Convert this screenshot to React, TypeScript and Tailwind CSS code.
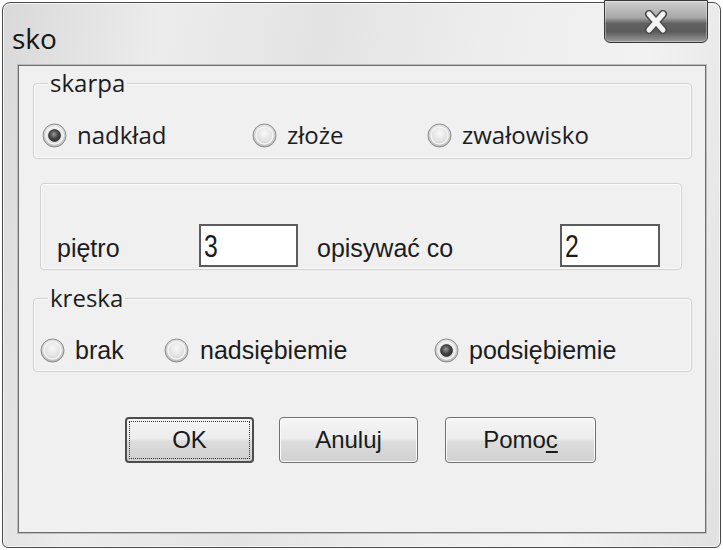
import React from 'react'

const segoe = { fontFamily: '"Open Sans", "Noto Sans", sans-serif' }
const arial = { fontFamily: '"Liberation Sans", Arial, sans-serif' }

function Radio({ checked }: { checked?: boolean }) {
  return (
    <svg width="25" height="25" viewBox="0 0 25 25" className="shrink-0">
      <defs>
        <radialGradient id="ring" cx="50%" cy="40%" r="60%">
          <stop offset="0%" stopColor="#f9f9f9" />
          <stop offset="60%" stopColor="#e0e0e0" />
          <stop offset="100%" stopColor="#b4b4b4" />
        </radialGradient>
        <radialGradient id="dot" cx="45%" cy="40%" r="60%">
          <stop offset="0%" stopColor="#9a9a9a" />
          <stop offset="55%" stopColor="#4a4a4a" />
          <stop offset="100%" stopColor="#2a2a2a" />
        </radialGradient>
      </defs>
      <circle cx="12.5" cy="12.5" r="11.5" fill="url(#ring)" stroke="#8c8c8c" strokeWidth="1" />
      <circle cx="12.5" cy="12.5" r="8.5" fill="none" stroke="#f4f4f4" strokeWidth="1.5" />
      {checked && <circle cx="12.5" cy="12.5" r="6" fill="url(#dot)" stroke="#3a3a3a" strokeWidth="0.8" />}
    </svg>
  )
}

function Group({ label, className, children }: { label?: string; className: string; children: React.ReactNode }) {
  return (
    <div className={`relative rounded-[4px] border border-[#d2d2d2] shadow-[inset_0_0_0_1px_#fbfbfb] ${className}`}>
      {label && (
        <span style={segoe} className="absolute left-[14px] top-[-15px] bg-[#f0f0f0] px-[2px] text-[24px] leading-[28px] text-[#1c1c1c]">
          {label}
        </span>
      )}
      {children}
    </div>
  )
}

function Button({ children, def, className }: { children: React.ReactNode; def?: boolean; className: string }) {
  return (
    <div
      style={arial}
      className={`flex h-[46px] items-center justify-center rounded-[4px] border bg-[linear-gradient(to_bottom,#f5f5f5_0%,#ececec_48%,#dddddd_52%,#d0d0d0_100%)] text-[24px] text-[#1a1a1a] ${
        def ? 'border-[#4d4d4d] border-2 p-[2px]' : 'border-[#707070] shadow-[inset_0_0_0_1px_#fafafa]'
      } ${className}`}
    >
      {def ? (
        <div className="flex h-full w-full items-center justify-center border border-dotted border-[#333]">{children}</div>
      ) : (
        children
      )}
    </div>
  )
}

export default function App() {
  return (
    <div className="h-[550px] w-[723px] overflow-hidden bg-white px-[2px] pt-[2px]">
      <div className="relative flex h-[546px] w-[719px] flex-col rounded-t-[8px] rounded-b-[6px] border border-[#4a4a4a] bg-[linear-gradient(100deg,#d9d9d9_0%,#ececec_20%,#e3e3e3_40%,#ededed_60%,#f2f2f2_80%,#e1e1e1_100%)] shadow-[inset_0_0_0_1px_#f6f6f6]">
        <div className="flex h-[62px] items-center pl-[9px] pt-[8px]">
          <span style={segoe} className="text-[28px] leading-none text-[#151515]">sko</span>
        </div>

        <div className="absolute right-[12px] top-[-3px] flex h-[43px] w-[104px] items-center justify-center rounded-b-[6px] border border-[#383838] bg-[linear-gradient(to_bottom,#cfcfcf_0%,#a8a8a8_40%,#616161_55%,#5c5c5c_75%,#9a9a9a_100%)] shadow-[inset_0_0_0_1px_rgba(255,255,255,0.35)]">
          <svg width="24" height="24" viewBox="0 0 24 24">
            <path d="M5 4 L19 20 M19 4 L5 20" stroke="#4a4a4a" strokeWidth="8" strokeLinecap="round" />
            <path d="M5 4 L19 20 M19 4 L5 20" stroke="#f4f4f4" strokeWidth="5" strokeLinecap="round" />
          </svg>
        </div>

        <div className="ml-[15px] h-[468px] w-[688px] border border-[#6e6e6e] bg-[#f0f0f0] shadow-[0_0_0_1px_#bdbdbd]">
          <Group label="skarpa" className="ml-[14px] mt-[17px] h-[76px] w-[659px]">
            <div className="mt-[36px] flex h-[30px] items-center pl-[8px]" style={segoe}>
              <div className="flex w-[210px] items-center gap-[10px] text-[24px] leading-none text-[#1c1c1c]">
                <Radio checked />
                nadkład
              </div>
              <div className="flex w-[175px] items-center gap-[10px] text-[24px] leading-none text-[#1c1c1c]">
                <Radio />
                złoże
              </div>
              <div className="flex items-center gap-[10px] text-[24px] leading-none text-[#1c1c1c]">
                <Radio />
                zwałowisko
              </div>
            </div>
          </Group>

          <Group className="ml-[21px] mt-[24px] h-[87px] w-[642px]">
            <div className="mt-[40px] flex h-[43px] items-center pl-[16px] text-[25px] text-[#1c1c1c]" style={arial}>
              <span className="w-[142px] pt-[6px]">piętro</span>
              <div className="h-[43px] w-[99px] border-2 border-[#5c5c5c] bg-white pl-[3px] pt-[4px]">
                <span className="inline-block origin-left scale-x-[0.8] text-[31px] leading-none">3</span>
              </div>
              <span className="ml-[19px] w-[243px] pt-[6px]">opisywać co</span>
              <div className="h-[43px] w-[100px] border-2 border-[#5c5c5c] bg-white pl-[3px] pt-[4px]">
                <span className="inline-block origin-left scale-x-[0.8] text-[31px] leading-none">2</span>
              </div>
            </div>
          </Group>

          <Group label="kreska" className="ml-[14px] mt-[28px] h-[74px] w-[659px]">
            <div className="mt-[36px] flex h-[30px] items-center pl-[6px] text-[25px] leading-none text-[#1c1c1c]" style={arial}>
              <div className="flex w-[124px] items-center gap-[10px]">
                <Radio />
                brak
              </div>
              <div className="flex w-[270px] items-center gap-[11px]">
                <Radio />
                nadsiębiemie
              </div>
              <div className="flex items-center gap-[10px]">
                <Radio checked />
                podsiębiemie
              </div>
            </div>
          </Group>

          <div className="ml-[106px] mt-[45px] flex">
            <Button def className="w-[129px]">OK</Button>
            <Button className="ml-[25px] w-[139px]">Anuluj</Button>
            <Button className="ml-[27px] w-[151px]">
              <span>
                Pomo<span className="underline underline-offset-[3px]">c</span>
              </span>
            </Button>
          </div>
        </div>
      </div>
    </div>
  )
}
